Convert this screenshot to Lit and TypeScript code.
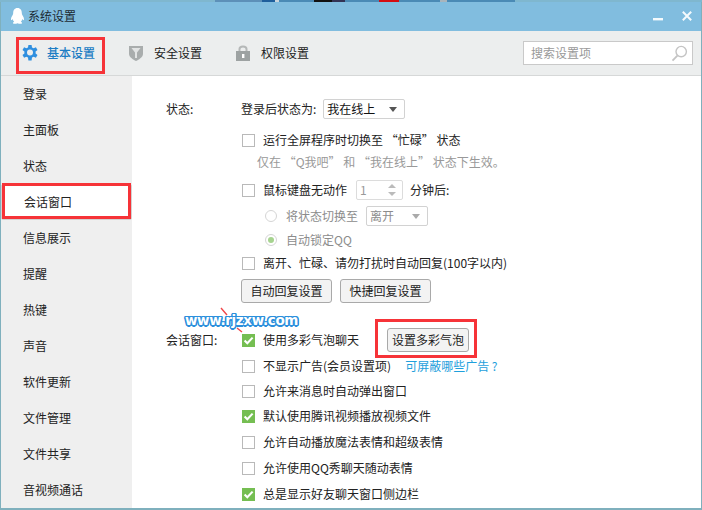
import { LitElement, html, css } from "lit";
import { customElement } from "lit/decorators.js";

const NAV = ["登录", "主面板", "状态", "会话窗口", "信息展示", "提醒", "热键", "声音", "软件更新", "文件管理", "文件共享", "音视频通话"];

const box = (on: boolean) => html`<span class="cb ${on ? "on" : ""}">${on
  ? html`<svg width="13" height="13" viewBox="0 0 13 13"><path d="M2.6 6.6 L5.3 9.3 L10.6 3.6" fill="none" stroke="#fff" stroke-width="2.1"/></svg>`
  : ""}</span>`;

@customElement("app-root")
export class AppRoot extends LitElement {
  static styles = css`
    :host { display: block; width: 702px; height: 510px; overflow: hidden; position: relative;
      font: 12px/16px "Noto Sans CJK SC", "Liberation Sans", sans-serif; color: #222;
      background: #7fb0bd; }
    .strip { height: 2px; background: linear-gradient(90deg, #7fb7cf 0 215px, #5d90b8 215px 262px, #1f5f9c 262px 275px, #c8d4dc 275px 279px, #4a8ab5 279px 314px, #111 314px 332px, #335 332px 345px, #4a8ab5 345px 379px, #d40d12 379px 399px, #4a8ab5 399px 440px, #a8b4bc 440px 447px, #4a8ab5 447px 515px, #7fb7cf 515px); }
    .win { margin: 0 1px; height: 506px; display: flex; flex-direction: column; background: #fff; overflow: hidden; }
    .title { height: 29px; flex: none; box-sizing: border-box; background: #81bddf; display: flex; align-items: center; padding: 0 9px 2px 9px; color: #1c2a33; }
    .title svg.qq { margin-right: 3px; }
    .title .t { flex: 1; }
    .ctl { display: flex; align-items: center; gap: 19px; }
    .tools { height: 45px; flex: none; box-sizing: border-box; background: #eceeee; border-bottom: 1px solid #d6d8d8; display: flex; align-items: center; padding: 0 8px 0 20px; }
    .tool { display: flex; align-items: center; font-size: 12px; color: #222; }
    .tool.a { width: 107px; color: #1c7dc4; font-weight: 500; }
    .tool.b { width: 107px; }
    .tool.c { flex: 1; }
    .tool svg { margin-right: 10px; flex: none; }
    .tool.a svg { margin-right: 8px; }
    .search { width: 170px; height: 24px; box-sizing: border-box; border: 1px solid #c9c9c9; background: #fff; display: flex; align-items: center; justify-content: space-between; padding: 0 4px 0 7px; color: #999; }
    .body { flex: 1; display: flex; min-height: 0; }
    .nav { width: 131px; flex: none; background: #efefef; }
    .nav div { height: 36px; display: flex; align-items: center; padding-left: 22px; box-sizing: border-box; }
    .nav div.sel { background: #fff; }
    .main { flex: 1; padding: 23px 0 0 34px; box-sizing: border-box; }
    .row { display: flex; align-items: center; height: 20px; }
    .lab { width: 75px; flex: none; }
    .ind { padding-left: 75px; }
    .m31 { margin-top: 11px; } .m22 { margin-top: 2px; } .m28 { margin-top: 8px; } .m26 { margin-top: 6px; }
    .m24 { margin-top: 4px; } .m23 { margin-top: 3px; } .m25 { margin-top: 5px; } .m45 { margin-top: 25px; }
    .cb { width: 13px; height: 13px; box-sizing: border-box; border: 1px solid #b9b9b9; background: #fff; margin: 0 8px 0 1px; flex: none; display: block; }
    .cb.on { background: #75be52; border: none; }
    .cb svg { display: block; }
    .hint { color: #999; padding-left: 16px; }
    .muted { color: #8c8c8c; }
    .sel { height: 20px; box-sizing: border-box; border: 1px solid #d2d2d2; border-radius: 2px; display: flex; align-items: center; justify-content: space-between; padding: 0 7px 0 3px; background: #fff; }
    .sel i { width: 0; height: 0; border: 4.5px solid transparent; border-top: 5px solid #555; border-bottom: 0; }
    .sel.s1 { width: 82px; margin-left: 7px; color: #111; }
    .sel.s2 { width: 62px; margin-left: 8px; color: #8c8c8c; }
    .sel.s2 i { border-top-color: #aaa; }
    .spin { width: 47px; height: 20px; box-sizing: border-box; border: 1px solid #dcdcdc; border-radius: 2px; margin: 0 7px 0 9px; display: flex; align-items: center; justify-content: space-between; padding: 0 6px 0 3px; color: #999; }
    .spin span { display: flex; flex-direction: column; gap: 4px; }
    .spin b { display: block; width: 0; height: 0; border: 4px solid transparent; }
    .spin b.u { border-bottom: 4px solid #bbb; border-top: 0; }
    .spin b.d { border-top: 4px solid #bbb; border-bottom: 0; }
    .rd { width: 12px; height: 12px; box-sizing: border-box; border: 1px solid #d5d5d5; border-radius: 50%; margin: 0 9px 0 24px; flex: none; background: #fff; display: flex; align-items: center; justify-content: center; }
    .rd.on::after { content: ""; width: 6px; height: 6px; border-radius: 50%; background: #a6d38f; }
    .btn { height: 24px; box-sizing: border-box; border: 1px solid #a9a9a9; border-radius: 3px; background: #f3f3f3; display: flex; align-items: center; justify-content: center; color: #222; flex: none; }
    .w91 { width: 91px; } .w82 { width: 82px; }
    .gap8 { gap: 8px; }
    .pair { margin-left: 28px; }
    .lnk { color: #1ea0dc; margin-left: 14px; }
    .bt { height: 24px; }
    .mark { position: absolute; border: 3px solid #f63338; box-sizing: border-box; pointer-events: none; }
    .mk1 { left: 16px; top: 37px; width: 89px; height: 37px; }
    .mk2 { left: 2px; top: 183px; width: 129px; height: 36px; }
    .mk3 { left: 375px; top: 319px; width: 102px; height: 39px; }
    .wm { position: absolute; left: 185px; top: 311px; font: bold 13.5px/18px "DejaVu Sans", sans-serif; color: #fff; letter-spacing: -0.35px; white-space: nowrap;
      text-shadow: 1.5px 0 0 #2b8fdc, -1.5px 0 0 #2b8fdc, 0 1.5px 0 #2b8fdc, 0 -1.5px 0 #2b8fdc, 1.2px 1.2px 0 #2b8fdc, -1.2px 1.2px 0 #2b8fdc, 1.2px -1.2px 0 #2b8fdc, -1.2px -1.2px 0 #2b8fdc; }
    .arr { position: absolute; left: 218px; top: 306px; }
  `;

  render() {
    return html`
      <div class="strip"></div>
      <div class="win">
        <div class="title">
          <svg class="qq" width="15" height="18" viewBox="0 0 15 18"><path d="M7.5 1 C4.4 1 3.2 3.4 3.2 6 C3.2 7 3 7.6 2.4 8.5 C1.3 10 .8 11.5 1.1 13 C1.6 13.4 2.2 12.8 2.7 12 C3 13.4 3.6 14.2 4.2 14.7 C3.4 15.1 2.8 15.6 3 16.2 C3.4 17 5.8 16.9 7.5 16.2 C9.2 16.9 11.6 17 12 16.2 C12.2 15.6 11.6 15.1 10.8 14.7 C11.4 14.2 12 13.4 12.3 12 C12.8 12.8 13.4 13.4 13.9 13 C14.2 11.5 13.7 10 12.6 8.5 C12 7.6 11.8 7 11.8 6 C11.8 3.4 10.6 1 7.5 1Z" fill="#fff"/></svg>
          <span class="t">系统设置</span>
          <span class="ctl">
            <svg width="10" height="10" viewBox="0 0 10 10"><rect x="0" y="7" width="10" height="2.4" fill="#f4fafd"/></svg>
            <svg width="10" height="10" viewBox="0 0 10 10"><path d="M.8 .8 L9.2 9.2 M9.2 .8 L.8 9.2" stroke="#f4fafd" stroke-width="2"/></svg>
          </span>
        </div>
        <div class="tools">
          <div class="tool a">
            <svg width="18" height="18" viewBox="0 0 18 18"><path d="M7.4 1 H10.6 L11 3.4 L12.7 4.2 L14.9 3.2 L16.5 5.9 L14.6 7.4 V9.6 L16.5 11.1 L14.9 13.8 L12.7 12.8 L11 13.6 L10.6 16.5 H7.4 L7 13.6 L5.3 12.8 L3.1 13.8 L1.5 11.1 L3.4 9.6 V7.4 L1.5 5.9 L3.1 3.2 L5.3 4.2 L7 3.4 Z" fill="#2f8fdf"/><circle cx="9" cy="8.6" r="3" fill="#eceeee"/></svg>
            基本设置
          </div>
          <div class="tool b">
            <svg width="16" height="18" viewBox="0 0 16 18"><path d="M1 2 H15 V10 C15 13 11 15.5 8 17 C5 15.5 1 13 1 10Z" fill="#a9adad"/><path d="M3.5 4 H12.5 L9 8.5 V14 H7 V8.5Z" fill="#e2e4e4"/></svg>
            安全设置
          </div>
          <div class="tool c">
            <svg width="16" height="18" viewBox="0 0 16 18"><path d="M4.5 8 V5 C4.5 1.5 11.5 1.5 11.5 5 V8" fill="none" stroke="#b5b8b8" stroke-width="2"/><rect x="1" y="7" width="14" height="10" fill="#9da2a2"/><rect x="7" y="10" width="2.4" height="4" fill="#fff"/></svg>
            权限设置
          </div>
          <div class="search">
            <span>搜索设置项</span>
            <svg width="17" height="17" viewBox="0 0 17 17"><circle cx="10.2" cy="6.6" r="5.2" fill="none" stroke="#c4c4c4" stroke-width="1.4"/><path d="M6.4 10.6 L1.5 15.6" stroke="#c4c4c4" stroke-width="1.8"/></svg>
          </div>
        </div>
        <div class="body">
          <div class="nav">${NAV.map((n) => html`<div class=${n === "会话窗口" ? "sel" : ""}>${n}</div>`)}</div>
          <div class="main">
            <div class="row"><span class="lab">状态:</span>登录后状态为:<span class="sel s1">我在线上<i></i></span></div>
            <div class="row ind m31">${box(false)}运行全屏程序时切换至 “忙碌” 状态</div>
            <div class="row ind m22"><span class="hint">仅在 “Q我吧” 和 “我在线上” 状态下生效。</span></div>
            <div class="row ind m28">${box(false)}鼠标键盘无动作<span class="spin">1<span><b class="u"></b><b class="d"></b></span></span>分钟后:</div>
            <div class="row ind m26"><span class="rd"></span><span class="muted">将状态切换至</span><span class="sel s2">离开<i></i></span></div>
            <div class="row ind m24"><span class="rd on"></span><span class="muted">自动锁定QQ</span></div>
            <div class="row ind m23">${box(false)}离开、忙碌、请勿打扰时自动回复(100字以内)</div>
            <div class="row ind m26 bt gap8"><span class="btn w91">自动回复设置</span><span class="btn w91">快捷回复设置</span></div>
            <div class="row m45 bt"><span class="lab">会话窗口:</span>${box(true)}使用多彩气泡聊天<span class="btn w82 pair">设置多彩气泡</span></div>
            <div class="row ind m24">${box(false)}不显示广告(会员设置项)<span class="lnk">可屏蔽哪些广告 ?</span></div>
            <div class="row ind m25">${box(false)}允许来消息时自动弹出窗口</div>
            <div class="row ind m25">${box(true)}默认使用腾讯视频播放视频文件</div>
            <div class="row ind m26">${box(false)}允许自动播放魔法表情和超级表情</div>
            <div class="row ind m26">${box(false)}允许使用QQ秀聊天随动表情</div>
            <div class="row ind m26">${box(true)}总是显示好友聊天窗口侧边栏</div>
          </div>
        </div>
      </div>
      <span class="mark mk1"></span>
      <span class="mark mk2"></span>
      <span class="mark mk3"></span>
      <svg class="arr" width="28" height="28" viewBox="0 0 28 28"><path d="M3 2 L9 9 M19 22 L24 26" stroke="#f0474a" stroke-width="1.4" fill="none"/></svg>
      <span class="wm">www.rjzxw.com</span>
    `;
  }
}
